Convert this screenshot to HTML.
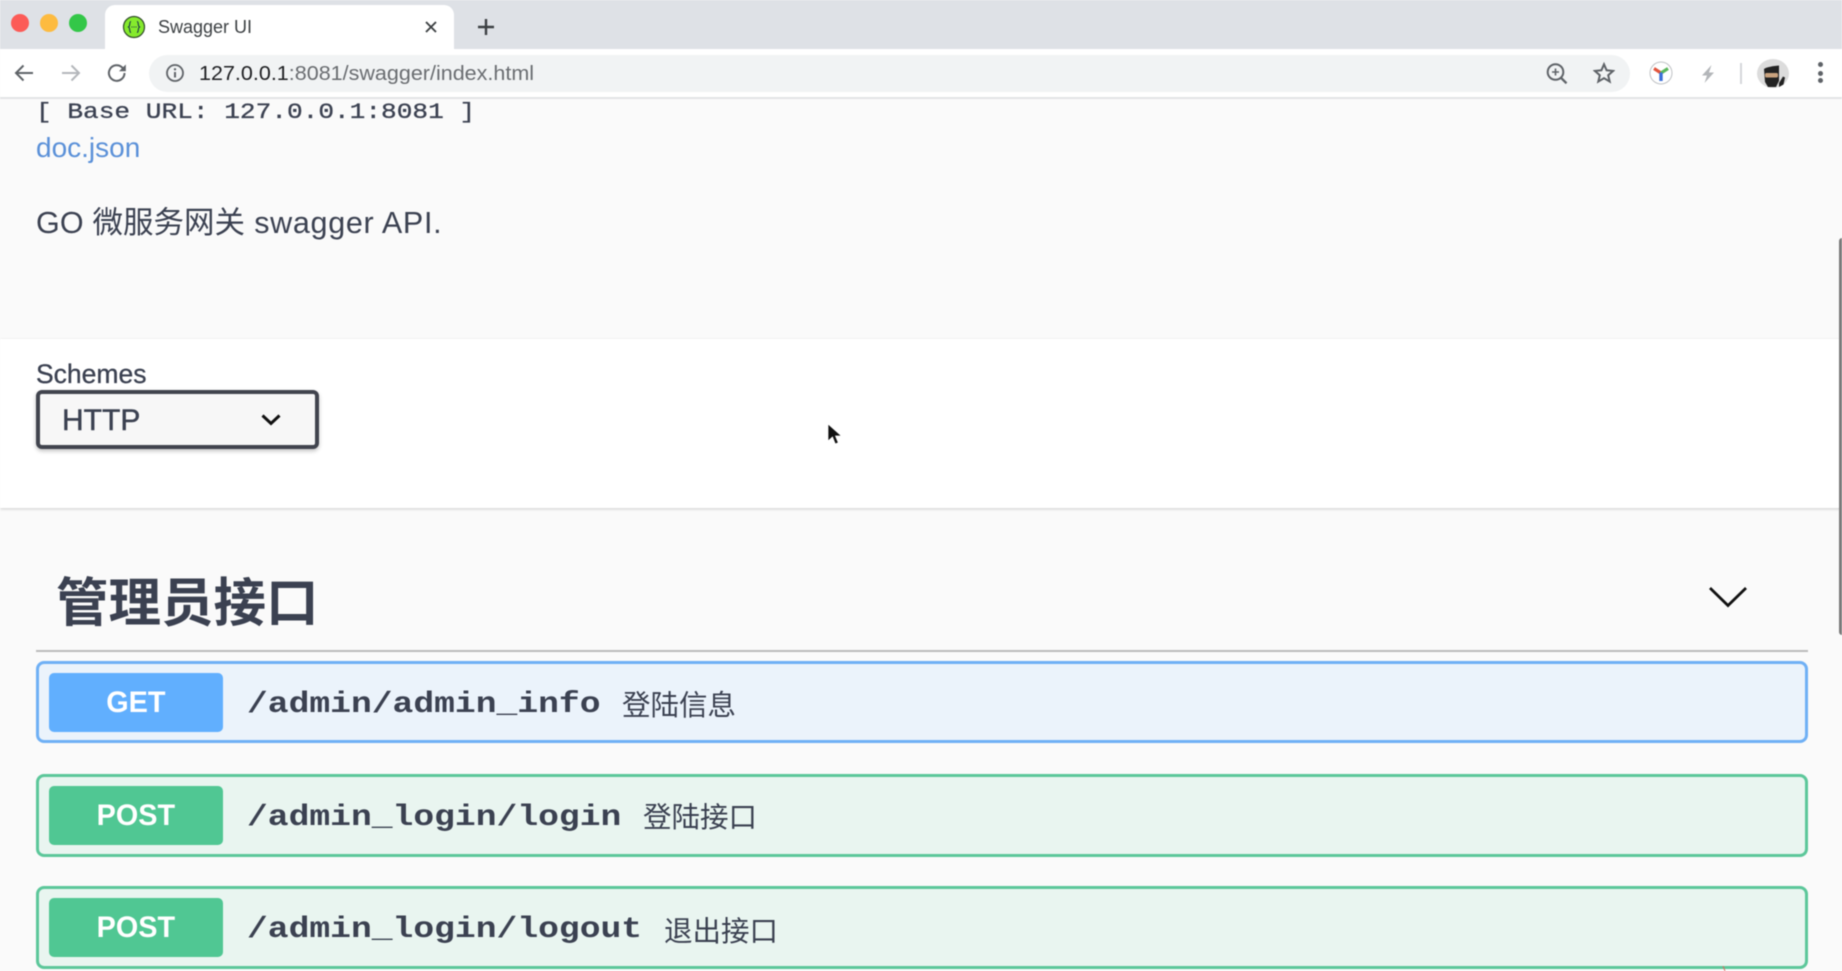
<!DOCTYPE html>
<html>
<head>
<meta charset="utf-8">
<title>Swagger UI</title>
<style>
html,body{margin:0;padding:0;width:1842px;height:971px;overflow:hidden;background:#fafafa}
body{position:relative;font-family:"Liberation Sans","Noto Sans CJK SC",sans-serif;color:#3b4151}
#w{position:absolute;left:0;top:0;width:1842px;height:971px;overflow:hidden;filter:blur(.45px)}
.a{position:absolute;white-space:nowrap}
.t{position:absolute;white-space:nowrap;transform-origin:0 50%}
.op{position:absolute;left:36px;width:1772px;height:83px;box-sizing:border-box;border-radius:8px;border:3px solid}
.get{background:#ebf3fb;border-color:#6fb0f5;height:82px}
.post{background:#e9f5f0;border-color:#5cc79a}
.b{position:absolute;left:49px;width:174px;height:59px;border-radius:5px;color:#fff;text-align:center;overflow:hidden}
.b span{display:inline-block;font-weight:700;font-size:30px;line-height:60px;transform:scaleX(.96)}
.p{font-family:"Liberation Mono",monospace;font-weight:700;font-size:30px;line-height:34px;transform:scaleX(1.155);left:246.500px;color:#3b4151}
.d{font-size:28.5px;line-height:36px;font-family:"Noto Sans CJK SC",sans-serif;color:#3b4151}
</style>
</head>
<body>
<div id="w">
<!-- tab strip -->
<div class="a" style="left:0;top:0;width:1842px;height:49px;background:#dee1e6"></div>
<div class="a" style="left:19.5px;top:23px;width:18px;height:18px;margin:-9px;border-radius:50%;background:#fc5b57"></div>
<div class="a" style="left:48.5px;top:23px;width:18px;height:18px;margin:-9px;border-radius:50%;background:#fdbb40"></div>
<div class="a" style="left:77.5px;top:23px;width:18px;height:18px;margin:-9px;border-radius:50%;background:#33c748"></div>
<div class="a" style="left:105px;top:5px;width:349px;height:44px;background:#fff;border-radius:10px 10px 0 0"></div>
<svg class="a" style="left:122px;top:15px" width="24" height="24" viewBox="0 0 24 24"><circle cx="12" cy="12" r="10.5" fill="#85ea2d" stroke="#2f4a2a" stroke-width="1.2"/><path d="M9 6.500c-2 0-.5 4.500-2.500 5.500 2 1 .5 5.500 2.500 5.500M15 6.500c2 0 .5 4.500 2.500 5.500-2 1-.5 5.500-2.500 5.500M9.500 12h1M11.500 12h1M13.500 12h1" fill="none" stroke="#173647" stroke-width="1.100"/></svg>
<div class="t" style="left:158px;top:16px;font-size:18px;line-height:22px;color:#3c4043">Swagger UI</div>
<svg class="a" style="left:423px;top:19px" width="16" height="16" viewBox="0 0 16 16"><path d="M3 3l10 10M13 3L3 13" stroke="#3c4043" stroke-width="1.900" fill="none"/></svg>
<svg class="a" style="left:476px;top:17px" width="20" height="20" viewBox="0 0 20 20"><path d="M10 2v16M2 10h16" stroke="#3c4043" stroke-width="2.400" fill="none"/></svg>
<!-- toolbar -->
<div class="a" style="left:0;top:49px;width:1842px;height:48px;background:#fff"></div>
<div class="a" style="left:0;top:97px;width:1842px;height:2px;background:#e3e4e6"></div>
<svg class="a" style="left:13px;top:62px" width="22" height="22" viewBox="0 0 22 22"><path d="M20 11H3M10.500 3.500L3 11l7.500 7.500" stroke="#5f6368" stroke-width="2" fill="none"/></svg>
<svg class="a" style="left:60px;top:62px" width="22" height="22" viewBox="0 0 22 22"><path d="M2 11h17M11.500 3.500L19 11l-7.500 7.500" stroke="#b4b7bb" stroke-width="2" fill="none"/></svg>
<svg class="a" style="left:106px;top:62px" width="22" height="22" viewBox="0 0 22 22"><path d="M18.500 11a7.800 7.800 0 1 1-2.300-5.500L19 8.300" stroke="#5f6368" stroke-width="2" fill="none"/><path d="M19.800 2.500v6.800H13z" fill="#5f6368"/></svg>
<div class="a" style="left:149px;top:55px;width:1481px;height:37px;border-radius:18.500px;background:#f1f3f4"></div>
<svg class="a" style="left:165px;top:63px" width="20" height="20" viewBox="0 0 20 20"><circle cx="10" cy="10" r="8" fill="none" stroke="#5f6368" stroke-width="1.800"/><path d="M10 9v5.500" stroke="#5f6368" stroke-width="2"/><circle cx="10" cy="6.300" r="1.200" fill="#5f6368"/></svg>
<div class="t" style="left:198.500px;top:61.500px;font-size:20.500px;line-height:24px;transform:scaleX(1.050);color:#6a6d71"><span style="color:#202124">127.0.0.1</span>:8081/swagger/index.html</div>
<svg class="a" style="left:1544.500px;top:62px" width="24" height="24" viewBox="0 0 24 24"><circle cx="10.500" cy="10" r="7.800" fill="none" stroke="#5f6368" stroke-width="2"/><path d="M16 15.800l5.500 5.500" stroke="#5f6368" stroke-width="2.400"/><path d="M10.500 6.500v7M7 10h7" stroke="#5f6368" stroke-width="1.600"/></svg>
<svg class="a" style="left:1592.500px;top:62px" width="22" height="22" viewBox="0 0 22 22"><path d="M11 2.300l2.600 6 6.500.6-4.900 4.300 1.500 6.400L11 16.200 5.300 19.600l1.500-6.400L1.900 8.900l6.500-.6z" fill="none" stroke="#5f6368" stroke-width="2"/></svg>
<svg class="a" style="left:1649px;top:61px" width="24" height="24" viewBox="0 0 24 24"><circle cx="12" cy="12" r="11" fill="#fff" stroke="#bfc2c5" stroke-width="1"/><path d="M12 12L5 7.500" stroke="#e2553d" stroke-width="3.200"/><path d="M12 12l7-4.500" stroke="#5cb85c" stroke-width="3.200"/><path d="M12 11.500V20" stroke="#3b6fd8" stroke-width="3.400"/></svg>
<svg class="a" style="left:1699px;top:64px" width="18" height="20" viewBox="0 0 18 20"><path d="M12.500 1L3 11.500h5L5.500 19 15 8.500h-5z" fill="#b3b6b9"/></svg>
<div class="a" style="left:1740px;top:63px;width:2px;height:21px;background:#d5d7da"></div>
<div class="a" style="left:1757px;top:59px;width:32px;height:29px;border-radius:50%;background:#dcdcdc;overflow:hidden"></div>
<svg class="a" style="left:1757px;top:57px" width="32" height="32" viewBox="0 0 32 32"><path d="M7 12c3-2 9-3 15-3.500V24l-3 6h-8l-3-5z" fill="#222"/><rect x="8" y="16" width="13" height="4.500" rx="1.500" fill="#c9a27e"/><path d="M22 26l4-6.500 2 1-1.500 7-4.500 2.500z" fill="#222"/></svg>
<div class="a" style="left:1817.500px;top:62px;width:5px;height:5px;border-radius:50%;background:#5f6368"></div>
<div class="a" style="left:1817.500px;top:70.500px;width:5px;height:5px;border-radius:50%;background:#5f6368"></div>
<div class="a" style="left:1817.500px;top:77.500px;width:5px;height:5px;border-radius:50%;background:#5f6368"></div>
<!-- info -->
<div class="t" style="left:36px;top:100px;font-family:'Liberation Mono',monospace;font-size:22px;line-height:26px;transform:scaleX(1.188);color:#3b4151;-webkit-text-stroke:.3px #3b4151">[ Base URL: 127.0.0.1:8081 ]</div>
<div class="t" style="left:36px;top:130px;font-size:28px;line-height:36px;color:#5a90d8">doc.json</div>
<div class="t" style="left:36px;top:204px;font-size:30.500px;line-height:38px;color:#3b4151;font-family:'Liberation Sans','Noto Sans CJK SC',sans-serif"><span style="letter-spacing:.2px">GO </span>微服务网关<span style="letter-spacing:.7px"> swagger API.</span></div>
<!-- schemes -->
<div class="a" style="left:0;top:339px;width:1842px;height:169px;background:#fff;box-shadow:0 1px 3px rgba(0,0,0,.18)"></div>
<div class="t" style="left:36px;top:358px;font-size:26.500px;line-height:32px;color:#3b4151;-webkit-text-stroke:.3px #3b4151">Schemes</div>
<div class="a" style="left:36px;top:389.500px;width:283px;height:59px;box-sizing:border-box;border:4px solid #41444e;border-radius:6px;background:#f7f7f7;box-shadow:0 2px 4px rgba(0,0,0,.25)"></div>
<div class="t" style="left:62px;top:402.500px;font-size:30px;line-height:36px;color:#3b4151;-webkit-text-stroke:.4px #3b4151">HTTP</div>
<svg class="a" style="left:259px;top:412px" width="24" height="16" viewBox="0 0 24 16"><path d="M3.500 3.500L12 11.500l8.500-8" fill="none" stroke="#111" stroke-width="3"/></svg>
<svg class="a" style="left:825px;top:422px" width="18" height="26" viewBox="0 0 18 26"><path d="M3 2v17l4.500-4 2.800 7 3-1.300-2.800-6.700h6z" fill="#111" stroke="#fff" stroke-width=".7"/></svg>
<!-- tag -->
<div class="t" style="left:56px;top:564px;font-family:'Noto Sans CJK SC',sans-serif;font-weight:700;font-size:52.500px;line-height:70px;color:#3b4151">管理员接口</div>
<svg class="a" style="left:1705px;top:583px" width="46" height="28" viewBox="0 0 46 28"><path d="M5 5l18 17.500L41 5" fill="none" stroke="#111" stroke-width="2.800"/></svg>
<div class="a" style="left:36px;top:650px;width:1772px;height:2px;background:#bcbcbc"></div>
<!-- ops -->
<div class="op get" style="top:661px"></div>
<div class="b" style="top:673px;background:#61affe"><span>GET</span></div>
<div class="t p" style="top:688px">/admin/admin_info</div>
<div class="t d" style="left:622px;top:686px">登陆信息</div>

<div class="op post" style="top:774px"></div>
<div class="b" style="top:786px;background:#50c793"><span>POST</span></div>
<div class="t p" style="top:801px">/admin_login/login</div>
<div class="t d" style="left:643px;top:798px">登陆接口</div>

<div class="op post" style="top:886px"></div>
<div class="b" style="top:898px;background:#50c793"><span>POST</span></div>
<div class="t p" style="top:913px">/admin_login/logout</div>
<div class="t d" style="left:664px;top:911.500px">退出接口</div>
<svg class="a" style="left:1720px;top:966px" width="8" height="5" viewBox="0 0 8 5"><path d="M3 0l2 5" stroke="#d9695f" stroke-width="1" fill="none"/></svg>
<!-- scrollbar -->
<div class="a" style="left:1838.500px;top:238px;width:6px;height:397px;border-radius:3px;background:#7a7a7a"></div>
</div>
</body>
</html>
